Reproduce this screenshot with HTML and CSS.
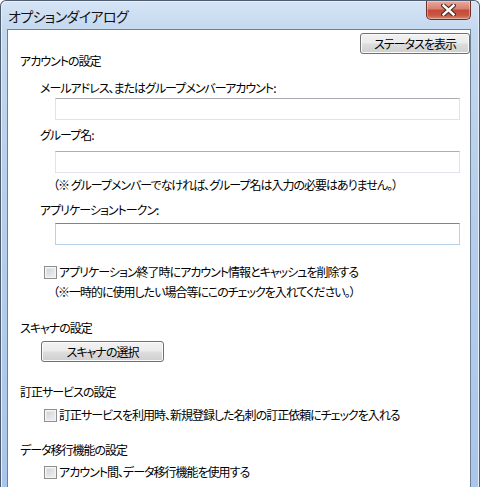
FILE: index.html
```html
<!DOCTYPE html>
<html lang="ja">
<head>
<meta charset="utf-8">
<title>オプションダイアログ</title>
<link rel="stylesheet" href="styles.css">
</head>
<body>
<div class="window">
  <div class="titlebar">
    <span class="title">オプションダイアログ</span>
    <div class="close">
      <svg width="15" height="12" viewBox="0 0 15 12">
        <path d="M2.5 1.5 L12.5 10.5 M12.5 1.5 L2.5 10.5" stroke="#4a2a26" stroke-width="4.6" stroke-linecap="square" fill="none"/>
        <path d="M2.5 1.5 L12.5 10.5 M12.5 1.5 L2.5 10.5" stroke="#ffffff" stroke-width="2.4" stroke-linecap="square" fill="none"/>
      </svg>
    </div>
  </div>
  <div class="client">
    <div class="toprow"><button class="btn btn-status">ステータスを表示</button></div>
    <div class="heading">アカウントの設定</div>
    <div class="label lbl-mail">メールアドレス、またはグループメンバーアカウント:</div>
    <div class="input in-mail"></div>
    <div class="label lbl-group">グループ名:</div>
    <div class="input in-group"></div>
    <div class="note note-group">（※ グループメンバーでなければ、グループ名は入力の必要はありません。）</div>
    <div class="label lbl-token">アプリケーショントークン:</div>
    <div class="input input-focus in-token"></div>
    <div class="check cb-clear"><span class="box"></span><span>アプリケーション終了時にアカウント情報とキャッシュを削除する</span></div>
    <div class="note note-clear">（※一時的に使用したい場合等にこのチェックを入れてください。）</div>
    <div class="heading hd-scan">スキャナの設定</div>
    <button class="btn btn-scan">スキャナの選択</button>
    <div class="heading hd-fix">訂正サービスの設定</div>
    <div class="check cb-fix"><span class="box"></span><span>訂正サービスを利用時、新規登録した名刺の訂正依頼にチェックを入れる</span></div>
    <div class="heading hd-move">データ移行機能の設定</div>
    <div class="check cb-move"><span class="box"></span><span>アカウント間、データ移行機能を使用する</span></div>
  </div>
</div>
</body>
</html>
```

FILE: styles.css
```css
html, body {
  margin: 0;
  padding: 0;
  background: #ffffff;
}
body {
  width: 480px;
  height: 487px;
  overflow: hidden;
  font-family: "Noto Sans CJK JP", "Noto Sans", sans-serif;
  font-size: 12px;
  color: #000000;
  font-feature-settings: "palt";
  letter-spacing: -1px;
}
.window {
  width: 480px;
  height: 487px;
  box-sizing: border-box;
  border: 1px solid #4f5d70;
  border-bottom: none;
  border-radius: 6px 6px 0 0;
  padding: 0 8px 0 6px;
  display: flex;
  flex-direction: column;
  background: linear-gradient(to bottom, #d6e5f6 0px, #c3d7ee 30px, #b7cfeb 200px, #a9c6ea 487px);
  box-shadow: inset 1px 1px 0 #e6eef9, inset -1px 0 0 #e6eef9;
}
.titlebar {
  height: 28px;
  flex: none;
  display: flex;
  justify-content: space-between;
  align-items: flex-start;
}
.title {
  margin-left: 1px;
  margin-top: 5px;
  font-size: 14px;
  line-height: 20px;
  letter-spacing: -0.6px;
  color: #111111;
}
.close {
  width: 45px;
  height: 19px;
  box-sizing: border-box;
  border: 1px solid #6e2d26;
  border-top: none;
  border-radius: 0 0 5px 5px;
  background: linear-gradient(to bottom, #e9a99b 0%, #d77f6e 45%, #c44a37 50%, #c85844 80%, #d88a70 100%);
  box-shadow: inset 0 0 0 1px rgba(255,255,255,0.35);
  display: flex;
  align-items: center;
  justify-content: center;
}
.close svg { display: block; }
.client {
  flex: 1;
  background: #ffffff;
  border: 1px solid #6f8196;
  border-bottom: none;
  padding-left: 12px;
  display: flex;
  flex-direction: column;
  align-items: flex-start;
}
.toprow {
  align-self: stretch;
  display: flex;
  justify-content: flex-end;
  margin-top: 3px;
}
.btn {
  font-family: inherit;
  font-size: 12px;
  font-feature-settings: "palt";
  letter-spacing: -1px;
  color: #000;
  height: 21px;
  padding: 0;
  box-sizing: border-box;
  border: 1px solid #707070;
  border-radius: 3px;
  background: linear-gradient(to bottom, #f2f2f2 0%, #ebebeb 48%, #dddddd 52%, #cfcfcf 100%);
  box-shadow: inset 0 0 0 1px #fbfbfb;
  line-height: 18px;
}
.btn-status {
  width: 110px;
  margin-right: 0;
}
.heading, .label, .note, .check {
  line-height: 14px;
  white-space: nowrap;
}
.heading { margin-top: 0; }
.label { margin-left: 20px; }
.lbl-mail { margin-top: 13px; }
.lbl-group { margin-top: 8px; }
.lbl-token { margin-top: 11px; }
.input {
  margin-left: 35px;
  width: 405px;
  height: 22px;
  box-sizing: border-box;
  border: 1px solid #e2e3ea;
  border-top-color: #abadb3;
  background: #ffffff;
}
.input-focus {
  border-color: #b7d2ec;
  border-top-color: #5d8dbf;
}
.in-mail { margin-top: 3px; }
.in-group { margin-top: 9px; }
.in-token { margin-top: 6px; }
.note { margin-left: 33px; }
.note-group { margin-top: 5px; }
.note-clear { margin-top: 6px; }
.check {
  margin-left: 24px;
  display: flex;
  align-items: center;
  gap: 2px;
}
.box {
  width: 13px;
  height: 13px;
  box-sizing: border-box;
  border: 1px solid #8e8f8f;
  background: linear-gradient(135deg, #c9ccd1 0%, #e4e5e7 60%, #f5f5f5 100%);
  box-shadow: inset 0 0 0 1px #f4f4f4, inset 0 0 0 2px #e9e9e9;
  flex: none;
}
.cb-clear { margin-top: 20px; }
.hd-scan { margin-top: 22px; }
.btn-scan {
  width: 123px;
  margin-left: 21px;
  margin-top: 6px;
}
.hd-fix { margin-top: 23px; }
.cb-fix { margin-top: 9px; }
.hd-move { margin-top: 21px; }
.cb-move { margin-top: 8px; }
```
